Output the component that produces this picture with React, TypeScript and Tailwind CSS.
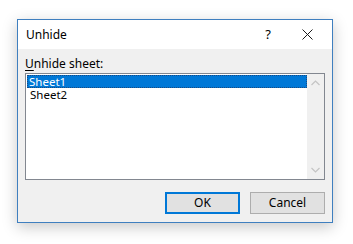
import React from 'react';

const font = { fontFamily: '"Noto Sans", "Liberation Sans", sans-serif' };

function CloseIcon() {
  return (
    <svg width="11" height="11" viewBox="0 0 11 11" fill="none" stroke="#1a1a1a" strokeWidth="1">
      <path d="M0.5 0.5 L10.5 10.5 M10.5 0.5 L0.5 10.5" />
    </svg>
  );
}

function Chevron({ up }: { up?: boolean }) {
  return (
    <svg width="9" height="6" viewBox="0 0 9 6" fill="none" stroke="#c4c4c4" strokeWidth="1.2">
      <path d={up ? 'M0.5 5 L4.5 1 L8.5 5' : 'M0.5 1 L4.5 5 L8.5 1'} />
    </svg>
  );
}

export default function App() {
  return (
    <div className="w-[353px] h-[244px] bg-white pt-[19px] pl-[17px] text-[12px] text-black" style={font}>
      <div className="w-[316px] h-[204px] border border-[#3f7fbf] flex flex-col shadow-[0_4px_14px_rgba(0,0,0,0.22)]">
        <div className="h-[29px] bg-white flex items-center shrink-0">
          <span className="pl-[8px] flex-1">Unhide</span>
          <span className="w-[20px] text-center mr-[24px] text-[13px]">?</span>
          <span className="mr-[19px] flex items-center"><CloseIcon /></span>
        </div>
        <div className="flex-1 bg-[#f0f0f0] px-[7px] pt-[7px] flex flex-col">
          <div className="leading-[16px] h-[16px]"><span className="underline underline-offset-2">U</span>nhide sheet:</div>
          <div className="mt-[1px] w-[300px] h-[107px] border border-[#828790] bg-white flex">
            <div className="flex-1 pl-[1px] pt-[1px] text-[11.5px] leading-[13px]">
              <div className="h-[13px] bg-[#0078d7] text-white pl-[2px] outline outline-1 outline-dotted outline-[#1a4a80] -outline-offset-1">Sheet1</div>
              <div className="h-[13px] pl-[3px]">Sheet2</div>
            </div>
            <div className="w-[17px] bg-[#f0f0f0] flex flex-col items-center justify-between py-[6px]">
              <Chevron up />
              <Chevron />
            </div>
          </div>
          <div className="flex justify-end gap-[10px] mt-[12px]">
            <div className="w-[75px] h-[22px] bg-[#e1e1e1] border-2 border-[#0078d7] flex items-center justify-center">OK</div>
            <div className="w-[75px] h-[22px] bg-[#e1e1e1] border border-[#adadad] flex items-center justify-center">Cancel</div>
          </div>
        </div>
      </div>
    </div>
  );
}
